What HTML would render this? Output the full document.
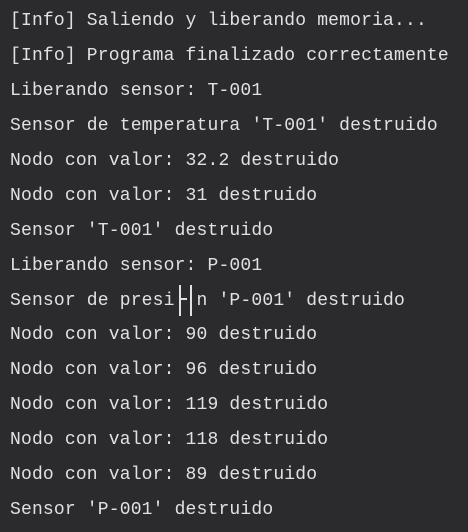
<!DOCTYPE html>
<html><head><meta charset="utf-8"><style>
html,body{margin:0;padding:0;}
body{width:468px;height:532px;background:#2b2b2d;overflow:hidden;position:relative;}
.t{position:absolute;left:10px;top:4px;font-family:"Liberation Mono",monospace;font-size:18px;letter-spacing:0.17px;line-height:34.93px;color:#dfe1e5;white-space:pre;}
.v{position:absolute;width:2px;height:31px;background:#dfe1e5;top:285px;}
.h{position:absolute;height:2px;width:6px;background:#dfe1e5;top:298px;left:181px;}
</style></head><body>
<div class="t">[Info] Saliendo y liberando memoria...
[Info] Programa finalizado correctamente
Liberando sensor: T-001
Sensor de temperatura 'T-001' destruido
Nodo con valor: 32.2 destruido
Nodo con valor: 31 destruido
Sensor 'T-001' destruido
Liberando sensor: P-001
Sensor de presi  n 'P-001' destruido
Nodo con valor: 90 destruido
Nodo con valor: 96 destruido
Nodo con valor: 119 destruido
Nodo con valor: 118 destruido
Nodo con valor: 89 destruido
Sensor 'P-001' destruido</div>
<div class="v" style="left:179px"></div>
<div class="h"></div>
<div class="v" style="left:190px"></div>
</body></html>
